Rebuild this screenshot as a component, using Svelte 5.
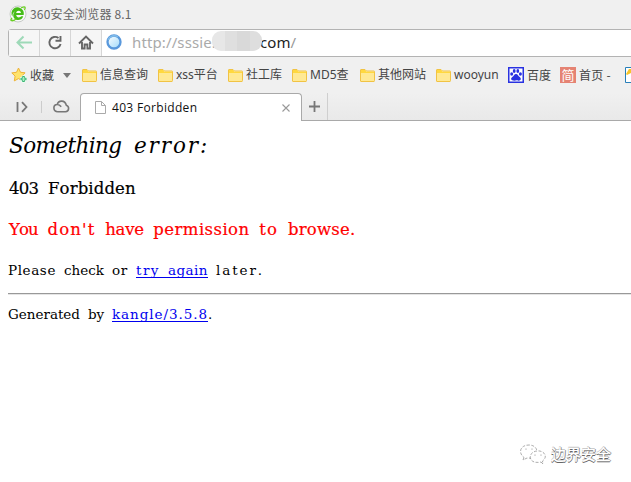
<script>
  const bookmarks = [
    { label: '信息查询', width: 76 },
    { label: 'xss平台', width: 70 },
    { label: '社工库', width: 64 },
    { label: 'MD5查', width: 68 },
    { label: '其他网站', width: 76 },
    { label: 'wooyun', width: 72 }
  ];

  function grid(node, cell) {
    const count = node.textContent.length;
    const natural = node.getBoundingClientRect().width;
    node.style.letterSpacing = `${cell - natural / count}px`;
  }
</script>

{#snippet words(text, cell)}{#each text.split(/( )/).filter(Boolean) as part}<span class="word" use:grid={cell}>{part}</span>{/each}{/snippet}

<div class="window">
  <header>
    <div class="title">
      <svg width="18" height="18" viewBox="0 0 18 18">
        <circle cx="9" cy="9" r="8" fill="#f8f9f8" stroke="#c8cbc8" />
        <path d="M3.5 11.6A6 6 0 0 1 13 4.3c1.8 1.4 2 3.6 1.7 5.8H7.2c.3 3.2 4.2 2.6 5 1.2h2.1c-1.6 4.8-7.5 4.8-9.5 1.5C3.8 11.2 4 8 6.2 6.3 4 7.7 3.3 9.3 3.5 11.6Z" fill="#46bd18" />
        <path d="M7.1 8.1h4.8C11.8 5 7.7 5 7.1 8.1Z" fill="#fff" />
        <path d="M3 13C-.1 16.5 4 16.4 7 14M12 3c4-2 5-1 3.4 2" fill="none" stroke="#68ce22" stroke-width="1.3" />
      </svg>
      <span>360安全浏览器 8.1</span>
    </div>

    <nav>
      <button aria-label="后退">
        <svg width="30" height="26" viewBox="0 0 30 26"><path d="M23 12.5H9M14.5 6.5 8.5 12.5l6 6" fill="none" stroke="#9ed9b8" stroke-width="2" /></svg>
      </button>
      <button aria-label="刷新">
        <svg width="30" height="26" viewBox="0 0 30 26"><path d="M18.5 8A5.7 5.7 0 1 0 20.6 14M20.5 6v4.7h-5" fill="none" stroke="#666" stroke-width="1.9" /></svg>
      </button>
      <button aria-label="主页">
        <svg width="30" height="26" viewBox="0 0 30 26"><path d="m8 13.5 7-7 7 7M11 12v6.5h2.6v-4h2.8v4H19V12" fill="none" stroke="#666" stroke-width="1.9" /></svg>
      </button>
      <div class="address">
        <svg width="16" height="16" viewBox="0 0 16 16">
          <defs><linearGradient id="globe" x2="1" y2="1"><stop stop-color="#fff" /><stop offset="1" stop-color="#9dd9fb" /></linearGradient></defs>
          <circle cx="8" cy="8" r="6.5" fill="url(#globe)" stroke="#5998dc" stroke-width="2.3" />
          <path d="M2 6a6.5 6.5 0 0 1 10-3" fill="none" stroke="#80bdea" stroke-width="1.4" />
        </svg>
        <span class="host">http://sssie.</span>
        <span class="mask"><i></i><i></i><i></i><i></i></span>
        <span class="domain">com<span>/</span></span>
      </div>
    </nav>

    <div class="bookmarks">
      <div class="favorite">
        <svg width="17" height="16" viewBox="0 0 17 16">
          <path d="m7.5 1 2 4.3 4.6.5-3.4 3.3.9 4.8-4.1-2.3-4.2 2.3.8-4.8L.8 5.9l4.7-.6Z" fill="#ffe36b" stroke="#eeb338" stroke-linejoin="round" />
          <path d="M12.5 8.5v7M9 12h7" stroke="#f0fff4" stroke-width="4" /><path d="M12.5 9v6M9.5 12h6" stroke="#37b471" stroke-width="2.5" /><path d="M12.5 10v4M10.5 12h4" stroke="#a9edc4" />
        </svg>
        <span>收藏</span>
        <svg class="caret" width="8" height="5" viewBox="0 0 8 5"><path d="M0 0h8L4 5Z" fill="#777" /></svg>
      </div>
      {#each bookmarks as bookmark}
        <div class="bookmark folder" style="width: {bookmark.width}px">
          <svg width="15" height="13" viewBox="0 0 15 13"><path d="M.5 1q0-.5.5-.5h4L6.5 2H14q.5 0 .5.5v9q0 1-.5 1H1q-.5 0-.5-.5Z" fill="#ffe994" stroke="#f1c344" /><path d="M1 1h4l1.5 2H14v1H1Z" fill="#ffd83f" /></svg>
          <span>{bookmark.label}</span>
        </div>
      {/each}
      <div class="bookmark baidu">
        <svg width="16" height="16" viewBox="0 0 16 16"><path d="M0 0h16v16H0Z" fill="#2932e1" /><path d="M1.5 1.5h13v13h-13Z" fill="#fff" /><g fill="#2932e1"><ellipse cx="3.7" cy="7" rx="1.5" ry="1.8" /><ellipse cx="6.2" cy="4" rx="1.4" ry="1.9" /><ellipse cx="9.8" cy="4" rx="1.4" ry="1.9" /><ellipse cx="12.4" cy="7" rx="1.5" ry="1.8" /><path d="M8 7c2 0 2 2 4 3.3 2 2 0 4-2 3.2-2-.6-3 .5-5 0-2-.4-2.6-2-1-3.3C6 9 6 7 8 7Z" /></g></svg>
        <span>百度</span>
      </div>
      <div class="bookmark home"><b>简</b><span>首页 -</span></div>
      <svg class="edge" width="6" height="16" viewBox="0 0 6 16"><path d="M6 .5H.5v15H6" fill="#fff" stroke="#287fb9" /><path d="M1 7 4 2h2v4L2 8Z" fill="#f6c52a" /></svg>
    </div>

    <div class="tabs">
      <div class="tools">
        <svg width="13" height="12" viewBox="0 0 13 12"><path d="M1.5 1v10M6 1.2 10.5 6 6 10.8" fill="none" stroke="#777" stroke-width="1.8" /></svg>
        <i></i>
        <svg width="17" height="13" viewBox="0 0 17 13"><path d="M4.2 11.8h8.3a3.4 3.4 0 0 0 .8-6.6C12-.2 5.5-.1 4.2 4.5-.1 4.5-.3 11 4.2 11.8M4.2 4.5c2 0 3 .8 4 2.2" fill="none" stroke="#777" stroke-width="1.6" /></svg>
      </div>
      <div class="tab">
        <svg width="11" height="13" viewBox="0 0 11 13"><path d="M.5.5h6l4 4v8H.5ZM6.5.5v4h4" fill="#fff" stroke="#aaa" /></svg>
        <span>403 Forbidden</span>
        <svg class="close" width="8" height="8" viewBox="0 0 8 8"><path d="m.5.5 7 7m0-7-7 7" stroke="#999" stroke-width="1.1" /></svg>
      </div>
      <div class="add"><svg width="11" height="11" viewBox="0 0 11 11"><path d="M5.5 0v11M0 5.5h11" stroke="#777" stroke-width="1.8" /></svg></div>
    </div>
  </header>

  <main>
    <h1>{@render words('Something error:', 12.5)}</h1>
    <h2>{@render words('403 Forbidden', 9.75)}</h2>
    <h2 class="warning">{@render words("You don't have permission to browse.", 9.62)}</h2>
    <p>{@render words('Please check or ', 8)}<a href="#again">{@render words('try again', 8)}</a>{@render words(' later.', 8)}</p>
    <hr />
    <p class="generated">{@render words('Generated by ', 8)}<a href="#kangle">{@render words('kangle/3.5.8', 8)}</a>{@render words('.', 8)}</p>
  </main>

  <footer>
    <svg width="27" height="21" viewBox="0 0 27 21">
      <g fill="#fff" stroke="#888" stroke-width=".7" stroke-dasharray="3 1.5"><path d="M4 13.5 3 16l4-2c13 2 13-13 2-13C0 1-2 9 4 13.5Z" /><path d="m21 18 2 2-.5-3C29 12 23 6 17 7c-10 1-9 14 4 11Z" /></g><g fill="#888"><circle cx="6" cy="5" r=".6" /><circle cx="12" cy="5" r=".6" /><circle cx="15" cy="11" r=".6" /><circle cx="21" cy="11" r=".6" /></g>
    </svg>
    <span>边界安全</span>
  </footer>
</div>

<style>
  :global(body) { margin: 0; overflow: hidden; }
  * { box-sizing: border-box; }
  .window { width: 631px; height: 482px; overflow: hidden; display: flex; flex-direction: column; background: #fff; font-family: "Noto Sans", "Noto Sans CJK SC", sans-serif; }
  svg { flex: none; display: block; }
  header { height: 121px; flex: none; background: #f0f0f0; color: #444; font-size: 12px; white-space: nowrap; }
  .title { height: 28px; padding-left: 9px; display: flex; align-items: center; gap: 3px; color: #666; font-size: 12px; }
  .title span { padding-bottom: 1px; font-family: "Noto Sans CJK SC", sans-serif; letter-spacing: .2px; }
  nav { height: 28px; width: 640px; margin: 1px 0 0 8px; display: flex; border: 1px solid #b3b3b3; border-radius: 3px; background: #fff; }
  button { width: 31px; height: 26px; flex: none; padding: 0; border: 0; border-right: 1px solid #d6d6d6; background: #f6f6f6; }
  .address { display: flex; align-items: center; padding-left: 4px; font-family: "Noto Sans", sans-serif; font-size: 15px; color: #aaa; }
  .address > svg { margin-bottom: 2px; }
  .host { width: 83px; margin-left: 10px; padding-bottom: 2px; letter-spacing: .12px; }
  .mask { width: 50px; height: 20px; margin-left: -3px; margin-top: -4px; display: flex; overflow: hidden; border-radius: 9px; z-index: 1; }
  .mask i { flex: 1; background: #e7e7e7; }
  .mask i:nth-child(2) { background: #dfdfdf; }
  .mask i:nth-child(3) { background: #d9d9d9; }
  .mask i:nth-child(4) { background: #dedede; }
  .domain { margin-left: -2px; padding-bottom: 2px; color: #222; letter-spacing: .1px; }
  .domain span { color: #999; }
  .bookmarks { height: 36px; display: flex; align-items: center; padding-left: 11px; font-family: "Noto Sans CJK SC", sans-serif; }
  .bookmarks span { padding-bottom: 2px; }
  .favorite { width: 71px; flex: none; display: flex; align-items: center; gap: 2px; }
  .caret { margin-left: 7px; }
  .bookmark { flex: none; display: flex; align-items: center; gap: 3px; }
  .folder { font-family: "Noto Sans", "Noto Sans CJK SC", sans-serif; }
  .baidu { width: 52px; }
  .home { width: 65px; gap: 3px; letter-spacing: .3px; }
  b { width: 16px; height: 16px; background: #e58373; color: #fff; font-size: 13px; font-weight: 400; line-height: 16px; text-align: center; letter-spacing: 0; }
  .tabs { height: 28px; display: flex; background: linear-gradient(#f0f0f0, #e9e9e9); border-bottom: 1px solid #a9a9a9; }
  .tools { width: 80px; display: flex; align-items: center; padding-left: 16px; }
  .tools i { width: 1px; height: 12px; margin: 0 11px 0 12px; background: #ccc; }
  .tab { width: 222px; height: 28px; display: flex; align-items: center; padding: 0 11px 0 14px; border: 1px solid #a9a9a9; border-bottom: 0; border-radius: 4px 4px 0 0; background: #fff; color: #111; }
  .tab span { margin-left: 6px; font-family: "Open Sans", sans-serif; font-size: 12px; letter-spacing: .32px; }
  .close { margin-left: auto; }
  .add { width: 26px; display: flex; align-items: center; justify-content: center; border-right: 1px solid #cfcfcf; }
  main { flex: none; padding: 10px 0 0 8px; color: #000; font-family: "DejaVu Serif", serif; white-space: nowrap; font-kerning: none; font-variant-ligatures: none; }
  .word { white-space: pre; }
  h1, h2, p { margin: 0; font-weight: 400; }
  h1 { padding-left: 1px; font-size: 21.5px; line-height: 30px; font-style: italic; }
  h2 { margin-top: 15px; padding-left: 1px; font-size: 16.5px; line-height: 26px; -webkit-text-stroke: .2px currentColor; }
  .warning { color: red; }
  p { margin: 17px 0 0; font-size: 13.5px; line-height: 20px; }
  a { color: #0000ee; text-decoration: underline; text-decoration-thickness: 1px; text-underline-offset: 2px; text-decoration-skip-ink: none; }
  hr { height: 2px; margin: 13px 0 0; border: 0; border-top: 1px solid #999; border-bottom: 1px solid #e5e5e5; }
  .generated { margin-top: 9px; }
  footer { margin: auto 0 17px 520px; display: flex; align-items: center; gap: 4px; color: #fff; font: 500 15px/22px "Noto Sans CJK SC", sans-serif; white-space: nowrap; text-shadow: 0 1px #666, 1px 0 #999, 0 -1px #ccc; }
</style>
